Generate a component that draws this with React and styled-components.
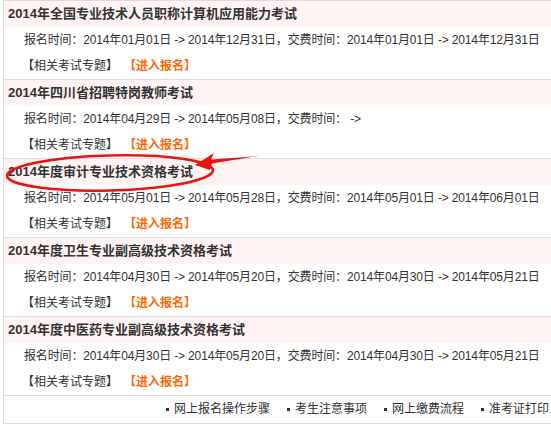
import React from 'react'
import styled, { createGlobalStyle } from 'styled-components'

const exams = [
  {
    id: 1,
    title: '2014年全国专业技术人员职称计算机应用能力考试',
    sign: ['2014年01月01日', '2014年12月31日'],
    pay: ['2014年01月01日', '2014年12月31日'],
  },
  {
    id: 2,
    title: '2014年四川省招聘特岗教师考试',
    sign: ['2014年04月29日', '2014年05月08日'],
    pay: ['', ''],
  },
  {
    id: 3,
    title: '2014年度审计专业技术资格考试',
    sign: ['2014年05月01日', '2014年05月28日'],
    pay: ['2014年05月01日', '2014年06月01日'],
  },
  {
    id: 4,
    title: '2014年度卫生专业副高级技术资格考试',
    sign: ['2014年04月30日', '2014年05月20日'],
    pay: ['2014年04月30日', '2014年05月21日'],
  },
  {
    id: 5,
    title: '2014年度中医药专业副高级技术资格考试',
    sign: ['2014年04月30日', '2014年05月20日'],
    pay: ['2014年04月30日', '2014年05月21日'],
  },
]

const footerLinks = ['网上报名操作步骤', '考生注意事项', '网上缴费流程', '准考证打印']

function App() {
  return (
    <StPage>
      <GlobalStyle />
      <StBox>
        {exams.map((exam) => (
          <StExam key={exam.id}>
            <StTitle>{exam.title}</StTitle>
            <StTime>
              报名时间：{exam.sign[0]} -&gt; {exam.sign[1]}，交费时间：{exam.pay[0]}
              {' '}-&gt;{exam.pay[1] ? ' ' + exam.pay[1] : ''}
            </StTime>
            <StLinks>
              <StLink>【相关考试专题】</StLink>
              <StLink $hot>【进入报名】</StLink>
            </StLinks>
          </StExam>
        ))}
        <StFooter>
          {footerLinks.map((text) => (
            <StFootItem key={text}>{text}</StFootItem>
          ))}
        </StFooter>
      </StBox>
      {/* red mark drawn over the third exam */}
      <StMark width="551" height="424" viewBox="0 0 551 424">
        <ellipse
          cx="110"
          cy="173"
          rx="103"
          ry="17.5"
          fill="none"
          stroke="#ee1111"
          strokeWidth="2.6"
          transform="rotate(-1.5 110 173)"
        />
        <polygon
          points="195,165 214,153 211,159.5 258,156 212,163.5 210,170"
          fill="#ee1111"
        />
      </StMark>
    </StPage>
  )
}

const GlobalStyle = createGlobalStyle`
  html, body {
    margin: 0;
    padding: 0;
    overflow: hidden;
    background: #fff;
  }
  body {
    font-family: "Liberation Sans", "Noto Sans CJK SC", sans-serif;
    color: #333;
  }
`

const StPage = styled.div`
  position: relative;
  width: 551px;
  height: 424px;
  overflow: hidden;
  padding-left: 3px;
  box-sizing: border-box;
`

const StBox = styled.div`
  width: 560px;
  border-left: 1px solid #ddd;
`

const StExam = styled.section`
  border-top: 1px solid #ddd;
`

const StTitle = styled.h3`
  margin: 0;
  height: 26px;
  line-height: 26px;
  padding-left: 4px;
  background: #fff3f3;
  font-size: 13px;
  font-weight: bold;
  color: #333;
  white-space: nowrap;
`

const StTime = styled.p`
  margin: 0;
  height: 26px;
  line-height: 26px;
  padding-left: 20px;
  font-size: 12px;
  color: #333;
  white-space: nowrap;
  letter-spacing: -0.15px;
`

const StLinks = styled.div`
  height: 26px;
  line-height: 26px;
  padding-left: 18px;
  font-size: 12px;
  white-space: nowrap;
`

const StLink = styled.span`
  color: ${(props) => (props.$hot ? '#ff6600' : '#333')};
  font-weight: ${(props) => (props.$hot ? 'bold' : 'normal')};
  margin-left: ${(props) => (props.$hot ? '12px' : '0')};
`

const StFooter = styled.div`
  display: flex;
  justify-content: flex-end;
  height: 27px;
  line-height: 27px;
  padding-right: 15px;
  border-top: 1px solid #ddd;
  border-bottom: 1px solid #ddd;
  font-size: 12px;
  white-space: nowrap;
`

const StFootItem = styled.span`
  display: flex;
  align-items: center;
  gap: 5px;
  margin-left: 17px;
  color: #333;

  &::before {
    content: '';
    width: 3px;
    height: 3px;
    background: #333;
  }
`

const StMark = styled.svg`
  position: absolute;
  left: 0;
  top: 0;
  pointer-events: none;
`

export default App
